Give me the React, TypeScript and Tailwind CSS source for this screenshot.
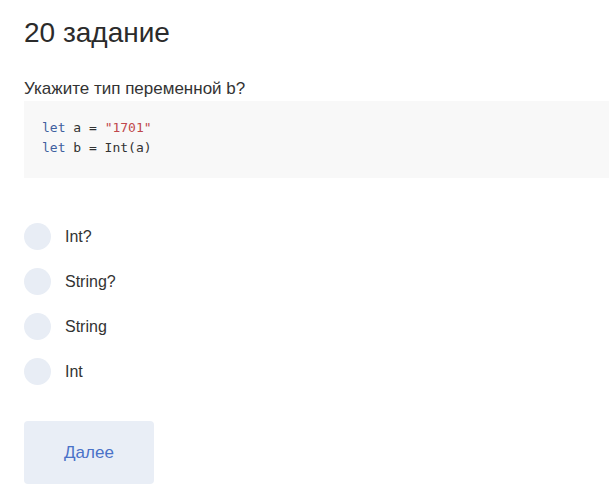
import React, { useState } from 'react';

const options = ['Int?', 'String?', 'String', 'Int'];

export default function App() {
  const [selected, setSelected] = useState<number | null>(null);

  return (
    <div className="min-h-screen bg-white pl-6 pt-4 text-[#333] font-['Liberation_Sans',Arial,sans-serif]">
      <h1 className="text-[28px] leading-[34px] font-normal text-[#2b2b2b]">20 задание</h1>

      <p className="mt-[28px] text-[17px] leading-[21px]">Укажите тип переменной b?</p>

      {/* Code block */}
      <pre className="mt-[2px] bg-[#f8f8f8] pl-[18px] pt-[17px] pb-[20px] text-[13px] leading-5 font-['DejaVu_Sans_Mono',monospace] text-[#333]">
        <span className="text-[#3f5f9f]">let</span> a = <span className="text-[#c0474c]">"1701"</span>
        {'\n'}
        <span className="text-[#3f5f9f]">let</span> b = Int(a)
      </pre>

      {/* Options */}
      <div className="mt-[45px] flex flex-col gap-[18px]">
        {options.map((opt, i) => (
          <label key={opt} className="flex items-center gap-[14px] cursor-pointer" onClick={() => setSelected(i)}>
            <span
              className={
                selected === i
                  ? 'w-[27px] h-[27px] rounded-full bg-[#4a72c8]'
                  : 'w-[27px] h-[27px] rounded-full bg-[#e8edf5]'
              }
            />
            <span className="text-[16px] leading-5">{opt}</span>
          </label>
        ))}
      </div>

      <button className="mt-[36px] w-[130px] h-[63px] rounded bg-[#e9eef6] text-[#4a72c8] text-[17px]">
        Далее
      </button>
    </div>
  );
}
